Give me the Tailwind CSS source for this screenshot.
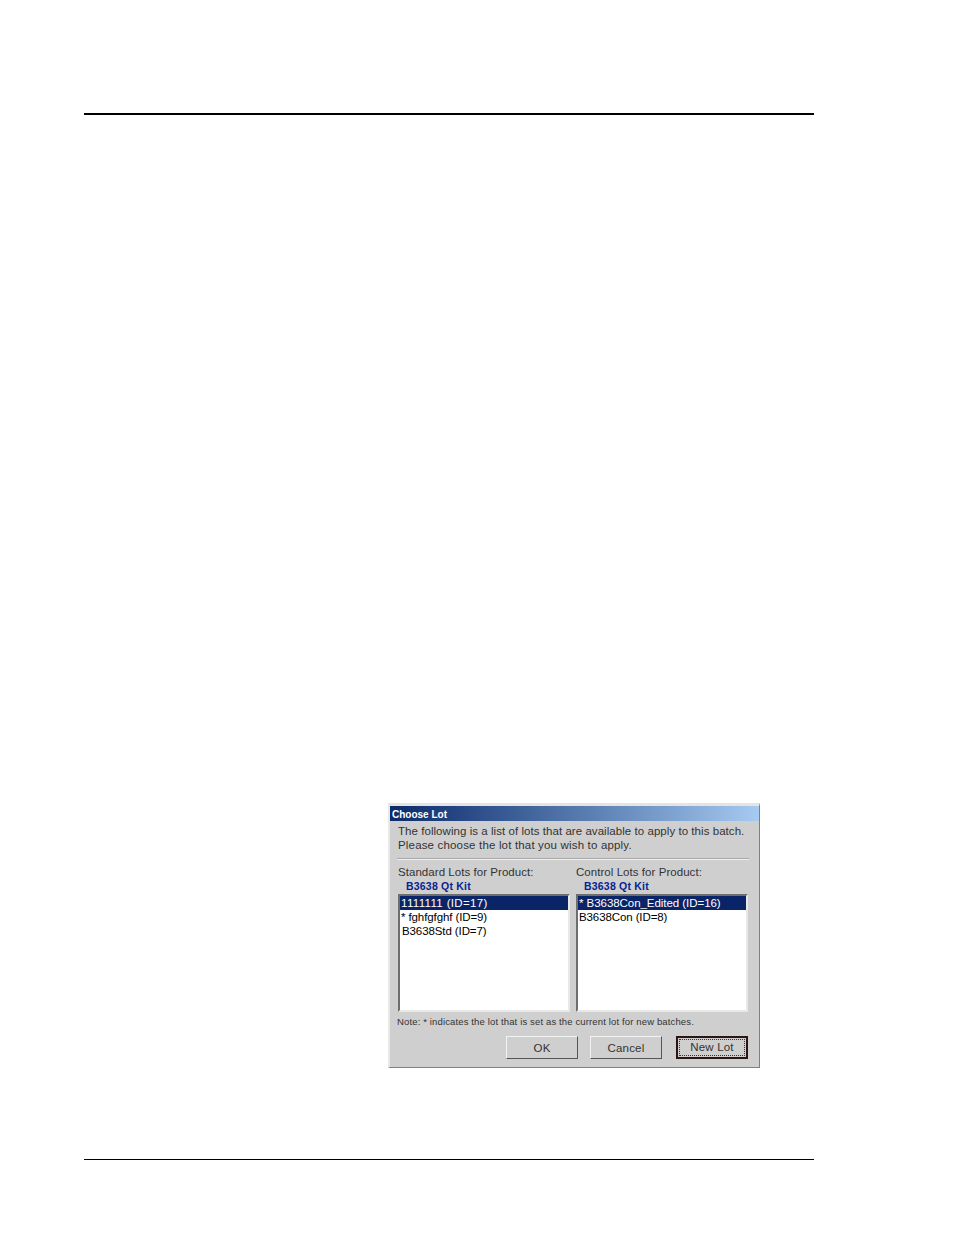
<!DOCTYPE html>
<html>
<head>
<meta charset="utf-8">
<script src="https://cdn.jsdelivr.net/npm/@tailwindcss/browser@4"></script>
</head>
<body class="bg-white">
<div class="w-[954px] h-[1235px] pt-[113px] pl-[84px] font-['Liberation_Sans',Arial,sans-serif] text-[#333]">
  <div class="w-[730px] h-[2px] bg-black"></div>
  <div class="flex justify-end w-[676px] mt-[688px] ml-0">
    <div class="w-[372px] h-[265px] bg-[#cfcfcf] border-t-[3px] border-l-[2px] border-r border-b-[1px] border-t-[#e4e4e4] border-l-[#e8e8e8] border-r-[#808080] border-b-[#808080] ml-auto flex flex-col">
      <div class="h-[15px] bg-gradient-to-r from-[#0d2a6b] to-[#a6caf0] text-white text-[10px] font-bold leading-[17px] pl-[2px]">Choose Lot</div>
      <div class="pl-[8px] pr-[10px] pt-[3px] text-[11.5px] leading-[14px] tracking-[0.17px] font-normal">
        <p class="whitespace-nowrap tracking-[0.05px]">The following is a list of lots that are available to apply to this batch.</p>
        <p class="whitespace-nowrap">Please choose the lot that you wish to apply.</p>
        <div class="h-[2px] mt-[6px] -ml-[1px] bg-[#a8a8a8] border-b border-b-[#f0f0f0]"></div>
        <div class="flex gap-[6px] mt-[5px]">
          <div class="w-[172px]">
            <p class="tracking-[0.05px]">Standard Lots for Product:</p>
            <p class="pl-[8px] text-[#0a1f8f] font-bold text-[10.5px] leading-[15px] tracking-[0.2px]">B3638 Qt Kit</p>
            <div class="h-[118px] bg-white border-2 border-t-[#6e6e6e] border-l-[#6e6e6e] border-r-[#e8e8e8] border-b-[#e8e8e8] text-black">
              <div class="h-[14px] bg-[#0a2468] text-white pl-[1px] leading-[15px] tracking-[0.35px]">1111111 (ID=17)</div>
              <div class="h-[14px] pl-[1px] leading-[15px] tracking-[-0.1px]">* fghfgfghf (ID=9)</div>
              <div class="h-[14px] pl-[2px] leading-[15px] tracking-[-0.1px]">B3638Std (ID=7)</div>
            </div>
          </div>
          <div class="w-[172px]">
            <p class="tracking-[0.05px]">Control Lots for Product:</p>
            <p class="pl-[8px] text-[#0a1f8f] font-bold text-[10.5px] leading-[15px] tracking-[0.2px]">B3638 Qt Kit</p>
            <div class="h-[118px] bg-white border-2 border-t-[#6e6e6e] border-l-[#6e6e6e] border-r-[#e8e8e8] border-b-[#e8e8e8] text-black">
              <div class="h-[14px] bg-[#0a2468] text-white pl-[1px] leading-[15px] tracking-[-0.05px]">* B3638Con_Edited (ID=16)</div>
              <div class="h-[15px] pl-[1px] leading-[15px] tracking-[-0.1px]">B3638Con (ID=8)</div>
            </div>
          </div>
        </div>
        <p class="text-[9.5px] leading-[12px] mt-[4px] -ml-[1px] tracking-[0.14px] whitespace-nowrap">Note: * indicates the lot that is set as the current lot for new batches.</p>
        <div class="flex justify-end mt-[8px] text-center leading-[22px]">
          <div class="w-[72px] h-[23px] bg-[#cfcfcf] border border-t-[#f2f2f2] border-l-[#f2f2f2] border-r-[#555] border-b-[#555]">OK</div>
          <div class="w-[72px] h-[23px] ml-[12px] bg-[#cfcfcf] border border-t-[#f2f2f2] border-l-[#f2f2f2] border-r-[#555] border-b-[#555]">Cancel</div>
          <div class="w-[72px] h-[23px] ml-[14px] mr-[1px] bg-[#cfcfcf] border-2 border-[#2a1414] p-[1px]">
            <div class="h-full border border-dotted border-[#333] leading-[15px]">New Lot</div>
          </div>
        </div>
      </div>
    </div>
  </div>
  <div class="w-[730px] h-[1px] bg-black mt-[91px]"></div>
</div>
</body>
</html>
